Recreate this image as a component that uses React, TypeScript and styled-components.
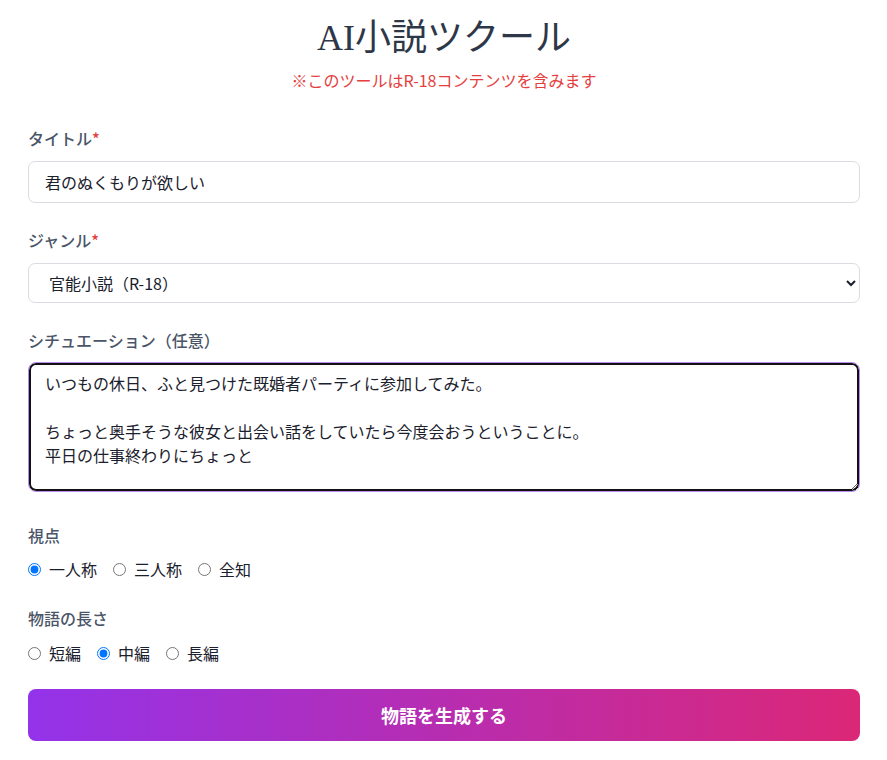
import React, { useState } from 'react';
import styled, { createGlobalStyle } from 'styled-components';

const GlobalStyle = createGlobalStyle`
  html, body {
    margin: 0;
    padding: 0;
    background: #ffffff;
  }
  body {
    font-family: 'Noto Sans CJK JP', 'Noto Sans', sans-serif;
    color: #1a202c;
  }
  * {
    box-sizing: border-box;
  }
`;

const Page = styled.main`
  padding: 18px 27px 20px 28px;
`;

const Header = styled.header`
  text-align: center;
`;

const Title = styled.h1`
  margin: 0;
  font-family: 'Liberation Serif', 'Noto Sans CJK JP', serif;
  font-size: 36px;
  font-weight: 400;
  line-height: 40px;
  color: #2d3748;
`;

const Notice = styled.p`
  margin: 10px 0 0;
  font-size: 16px;
  line-height: 24px;
  color: #e53e3e;
`;

const Form = styled.form`
  margin-top: 34px;
  display: flex;
  flex-direction: column;
`;

const Field = styled.div<{ $gap?: number }>`
  margin-bottom: ${(p) => p.$gap ?? 25}px;
`;

const Label = styled.label<{ $space?: number }>`
  display: block;
  margin-bottom: ${(p) => p.$space ?? 11}px;
  font-size: 16px;
  line-height: 24px;
  font-weight: 500;
  color: #4a5568;
`;

const Required = styled.span`
  color: #e53e3e;
`;

const TextInput = styled.input`
  display: block;
  width: 100%;
  height: 42px;
  padding: 0 16px;
  border: 1px solid #d9dce1;
  border-radius: 7px;
  font-family: inherit;
  font-size: 16px;
  color: #1a202c;
  background: #fff;
  outline: none;
`;

const Select = styled.select`
  display: block;
  width: 100%;
  height: 40px;
  padding: 0 8px 0 16px;
  border: 1px solid #d9dce1;
  border-radius: 7px;
  font-family: inherit;
  font-size: 16px;
  color: #1a202c;
  background: #fff;
  outline: none;
`;

const TextArea = styled.textarea`
  display: block;
  width: 100%;
  height: 130px;
  padding: 8px 16px;
  border: 1px solid #b98af0;
  border-radius: 8px;
  box-shadow: inset 0 0 0 2px #111111;
  font-family: inherit;
  font-size: 16px;
  line-height: 24px;
  color: #1a202c;
  background: #fff;
  outline: none;
`;

const RadioRow = styled.div`
  display: flex;
  align-items: center;
  gap: 16px;
  height: 24px;
`;

const RadioOption = styled.label`
  display: flex;
  align-items: center;
  gap: 8px;
  font-size: 16px;
  line-height: 24px;
  color: #1a202c;
  cursor: pointer;

  input {
    margin: 0;
    width: 13px;
    height: 13px;
  }
`;

const GenerateButton = styled.button`
  height: 52px;
  width: 100%;
  border: none;
  border-radius: 8px;
  background: linear-gradient(90deg, #9333ea 0%, #db2777 100%);
  color: #ffffff;
  font-family: inherit;
  font-size: 18px;
  font-weight: 700;
  cursor: pointer;
`;

interface RadioGroupProps {
  name: string;
  options: string[];
  value: string;
  onChange: (v: string) => void;
}

const RadioGroup = ({ name, options, value, onChange }: RadioGroupProps) => (
  <RadioRow>
    {options.map((o) => (
      <RadioOption key={o}>
        <input type="radio" name={name} checked={value === o} onChange={() => onChange(o)} />
        {o}
      </RadioOption>
    ))}
  </RadioRow>
);

export default function App(): React.ReactElement {
  const [title, setTitle] = useState('君のぬくもりが欲しい');
  const [genre, setGenre] = useState('官能小説（R-18）');
  const [situation, setSituation] = useState(
    'いつもの休日、ふと見つけた既婚者パーティに参加してみた。\n\nちょっと奥手そうな彼女と出会い話をしていたら今度会おうということに。\n平日の仕事終わりにちょっと'
  );
  const [view, setView] = useState('一人称');
  const [length, setLength] = useState('中編');

  return (
    <Page>
      <GlobalStyle />
      <Header>
        <Title>AI小説ツクール</Title>
        <Notice>※このツールはR-18コンテンツを含みます</Notice>
      </Header>
      <Form onSubmit={(e) => e.preventDefault()}>
        <Field>
          <Label>タイトル<Required>*</Required></Label>
          <TextInput value={title} onChange={(e) => setTitle(e.target.value)} />
        </Field>
        <Field>
          <Label>ジャンル<Required>*</Required></Label>
          <Select value={genre} onChange={(e) => setGenre(e.target.value)}>
            <option>官能小説（R-18）</option>
            <option>恋愛小説</option>
            <option>ファンタジー</option>
            <option>ミステリー</option>
          </Select>
        </Field>
        <Field $gap={31}>
          <Label $space={10}>シチュエーション（任意）</Label>
          <TextArea value={situation} onChange={(e) => setSituation(e.target.value)} />
        </Field>
        <Field>
          <Label $space={10}>視点</Label>
          <RadioGroup name="view" options={['一人称', '三人称', '全知']} value={view} onChange={setView} />
        </Field>
        <Field $gap={24}>
          <Label>物語の長さ</Label>
          <RadioGroup name="length" options={['短編', '中編', '長編']} value={length} onChange={setLength} />
        </Field>
        <GenerateButton type="submit">物語を生成する</GenerateButton>
      </Form>
    </Page>
  );
}
